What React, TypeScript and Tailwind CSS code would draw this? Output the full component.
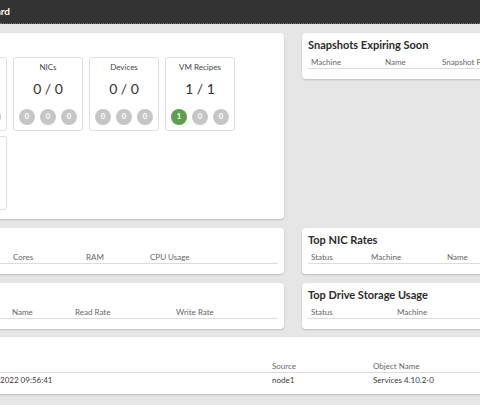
import React from "react";

type Col = { label: string; w?: string };

const Panel = ({ title, cols, className = "" }: { title: string; cols: Col[]; className?: string }) => (
  <div className={`bg-white rounded-[4px] shadow-[0_1px_2px_rgba(0,0,0,0.18)] pt-[5px] px-[6px] pb-[10px] ${className}`}>
    <h3 className="text-[11px] leading-[14px] font-bold text-[#2b2b2b] whitespace-nowrap">{title}</h3>
    <div className="mt-[4px] flex border-b border-[#dcdcdc]">
      {cols.map((c) => (
        <div key={c.label} className={`${c.w ?? "flex-1"} shrink-0 px-[3px] text-[8px] leading-[12px] text-[#666] whitespace-nowrap`}>
          {c.label}
        </div>
      ))}
    </div>
  </div>
);

const Dot = ({ n, on }: { n: number; on?: boolean }) => (
  <div
    className={`w-[16px] h-[16px] rounded-full flex items-center justify-center text-[7.5px] font-bold text-white ${
      on ? "bg-[#5e9e4c]" : "bg-[#c6c6c6]"
    }`}
  >
    {n}
  </div>
);

const StatCard = ({ title, value, dots }: { title: string; value: string; dots: [number, number, number] }) => (
  <div className="w-[70px] h-[74px] border border-[#dedede] rounded-[3px] flex flex-col items-center">
    <div className="mt-[3px] text-[8px] leading-[12px] text-[#444] whitespace-nowrap">{title}</div>
    <div className="mt-[6px] text-[14px] leading-[20px] font-normal text-[#333] whitespace-nowrap">{value}</div>
    <div className="mt-[10px] flex gap-[5px]">
      <Dot n={dots[0]} on={dots[0] > 0} />
      <Dot n={dots[1]} />
      <Dot n={dots[2]} />
    </div>
  </div>
);

export default function App() {
  return (
    <div className="w-[480px] h-[405px] overflow-hidden bg-[#e6e6e6] font-['Lato',sans-serif]">
      <header className="h-[24px] bg-[#333333] border-b border-dotted border-[#6a6a6a] flex items-center">
        <div className="w-[10px] flex justify-end whitespace-nowrap text-white font-bold text-[10px]">Dashboard</div>
      </header>

      <div className="-ml-[90px] w-[692px] pt-[9px]">
        <div className="grid grid-cols-[374px_300px] gap-x-[18px] gap-y-[9px] items-start">
          {/* machines overview */}
          <div className="bg-white rounded-[4px] shadow-[0_1px_2px_rgba(0,0,0,0.18)] h-[186px] pt-[5px] px-[6px]">
            <h3 className="text-[11px] leading-[14px] font-bold text-[#2b2b2b]">Status</h3>
            <div className="mt-[5px] ml-[21px] w-[298px] flex flex-wrap gap-x-[6px] gap-y-[5px]">
              <StatCard title="Machines" value="1 / 1" dots={[1, 0, 0]} />
              <StatCard title="NICs" value="0 / 0" dots={[0, 0, 0]} />
              <StatCard title="Devices" value="0 / 0" dots={[0, 0, 0]} />
              <StatCard title="VM Recipes" value="1 / 1" dots={[1, 0, 0]} />
              <div className="w-[70px] h-[74px] border border-[#dedede] rounded-[3px]" />
            </div>
          </div>

          <Panel
            title="Snapshots Expiring Soon"
            cols={[
              { label: "Machine", w: "w-[74px]" },
              { label: "Name", w: "w-[57px]" },
              { label: "Snapshot Protection" },
            ]}
          />

          <Panel
            title="Top CPU"
            cols={[
              { label: "Status", w: "w-[44px]" },
              { label: "Machine", w: "w-[50px]" },
              { label: "Cores", w: "w-[73px]" },
              { label: "RAM", w: "w-[64px]" },
              { label: "CPU Usage" },
            ]}
          />

          <Panel
            title="Top NIC Rates"
            cols={[
              { label: "Status", w: "w-[60px]" },
              { label: "Machine", w: "w-[76px]" },
              { label: "Name", w: "w-[80px]" },
              { label: "Rate" },
            ]}
          />

          <Panel
            title="Top IO"
            cols={[
              { label: "Status", w: "w-[44px]" },
              { label: "Machine", w: "w-[49px]" },
              { label: "Name", w: "w-[63px]" },
              { label: "Read Rate", w: "w-[101px]" },
              { label: "Write Rate" },
            ]}
          />

          <Panel
            title="Top Drive Storage Usage"
            cols={[
              { label: "Status", w: "w-[86px]" },
              { label: "Machine", w: "w-[90px]" },
              { label: "Usage" },
            ]}
          />
        </div>

        {/* events */}
        <div className="mt-[8px] bg-white rounded-[4px] shadow-[0_1px_2px_rgba(0,0,0,0.18)] pt-[5px] px-[6px] pb-[7px]">
          <h3 className="text-[11px] leading-[14px] font-bold text-[#2b2b2b]">Events</h3>
          <div className="mt-[4px] flex border-b border-[#dcdcdc] text-[8px] leading-[12px] text-[#666]">
            <div className="w-[54px] shrink-0 px-[3px]">Level</div>
            <div className="w-[299px] shrink-0 px-[3px]">Time</div>
            <div className="w-[101px] shrink-0 px-[3px]">Source</div>
            <div className="flex-1 px-[3px]">Object Name</div>
          </div>
          <div className="flex text-[8px] leading-[14px] text-[#3a3a3a] whitespace-nowrap">
            <div className="w-[54px] shrink-0 px-[3px]">Info</div>
            <div className="w-[299px] shrink-0 px-[3px] flex">
              <span className="w-[27px] flex justify-end">05/10/</span>
              <span>2022 09:56:41</span>
            </div>
            <div className="w-[101px] shrink-0 px-[3px]">node1</div>
            <div className="flex-1 px-[3px]">Services 4.10.2-0</div>
          </div>
        </div>
      </div>
    </div>
  );
}
